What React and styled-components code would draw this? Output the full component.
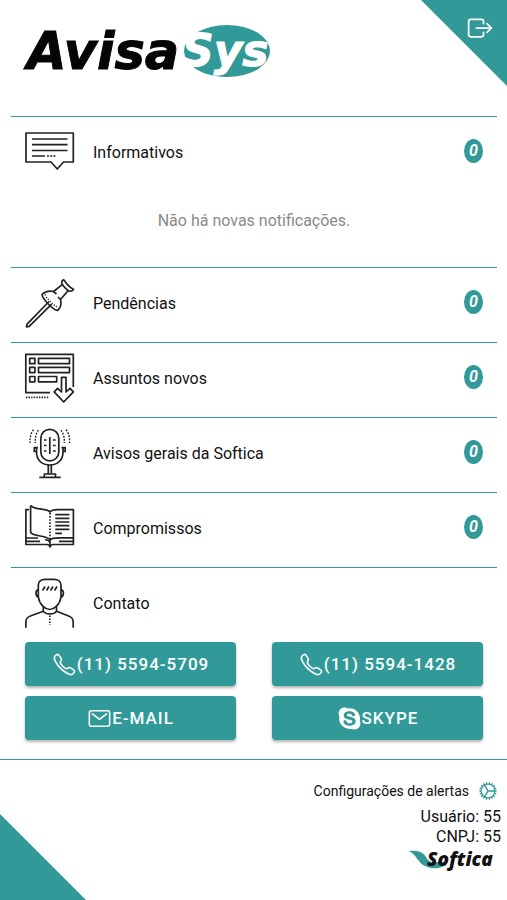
import React from "react";
import styled, { createGlobalStyle } from "styled-components";
import {
  IoCallOutline,
  IoCogOutline,
  IoExitOutline,
  IoLogoSkype,
  IoMailOutline,
} from "react-icons/io5";

const teal = "#319a98";

const GlobalStyle = createGlobalStyle`
  * {
    box-sizing: border-box;
  }
  body {
    margin: 0;
    background: #fff;
    color: #111;
    font-family: Roboto, sans-serif;
    font-size: 16px;
  }
`;

const Page = styled.div`
  display: flex;
  flex-direction: column;
  min-height: 100vh;
`;

const Header = styled.header`
  display: flex;
  justify-content: space-between;
  align-items: flex-start;
  height: 116px;
`;

const Brand = styled.h1`
  margin: 0;
  padding: 20px 0 0 22px;
  line-height: 0;
`;

const ExitButton = styled.button`
  display: flex;
  justify-content: flex-end;
  align-items: flex-start;
  width: 86px;
  height: 86px;
  padding: 14px 13px;
  border: 0;
  background: ${teal};
  color: #fff;
  clip-path: polygon(0 0, 100% 0, 100% 100%);
  cursor: pointer;
`;

const Main = styled.main`
  padding: 0 10px 19px 11px;
`;

const Section = styled.section`
  border-top: 1px solid ${teal};
`;

const Row = styled.button`
  display: flex;
  align-items: center;
  width: 100%;
  padding: 11px 14px 14px;
  border: 0;
  background: none;
  color: inherit;
  font: inherit;
  text-align: left;
  cursor: pointer;
`;

const RowLabel = styled.span`
  flex: 1;
  margin-left: 19px;
`;

const Badge = styled.span`
  width: 19px;
  height: 24px;
  margin-bottom: 3px;
  border-radius: 50%;
  background: ${teal};
  color: #fff;
  font-size: 16px;
  font-style: italic;
  font-weight: 700;
  line-height: 24px;
  text-align: center;
`;

const Empty = styled.p`
  margin: 0;
  padding: 19px 0 35px;
  color: #8a8a8a;
  line-height: 22px;
  text-align: center;
`;

const LineIcon = styled.svg`
  width: 49px;
  height: 49px;
  overflow: visible;
  fill: none;
  stroke: #222;
  stroke-width: 1.7;
  stroke-linejoin: round;
`;

const Contacts = styled.div`
  display: grid;
  grid-template-columns: 1fr 1fr;
  gap: 10px 36px;
  padding: 0 14px;
`;

const ContactLink = styled.a`
  display: flex;
  justify-content: center;
  align-items: center;
  height: 44px;
  border-radius: 4px;
  background: ${teal};
  box-shadow: 0 2px 3px rgba(0, 0, 0, 0.3);
  color: #fff;
  font-size: 17px;
  font-weight: 500;
  letter-spacing: 1px;
  text-decoration: none;
`;

const Footer = styled.footer`
  display: flex;
  flex: 1;
  justify-content: space-between;
  border-top: 1px solid ${teal};
`;

const Corner = styled.div`
  align-self: flex-end;
  width: 86px;
  height: 86px;
  background: ${teal};
  clip-path: polygon(0 0, 100% 100%, 0 100%);
`;

const Info = styled.div`
  display: flex;
  flex-direction: column;
  align-items: flex-end;
  padding: 20px 6px 0 0;
  line-height: 20px;
`;

const SettingsButton = styled.button`
  display: flex;
  align-items: center;
  gap: 8px;
  margin: 0 2px 5px 0;
  padding: 0;
  border: 0;
  background: none;
  color: inherit;
  font: inherit;
  font-size: 14px;
  cursor: pointer;

  svg {
    color: ${teal};
  }
`;

const SofticaLogo = styled.svg`
  margin-right: 8px;
`;

function MessageIcon() {
  return (
    <LineIcon viewBox="0 0 49 49" aria-hidden="true">
      <path d="M1 5H48.3V34H38.5L32.3 41L26 34H1Z" />
      <path d="M7 11H42.5M7 16.7H42.5M7 22.5H42.5M7 28H20" />
      <path d="M22 28H31" strokeDasharray="2 1.2" />
    </LineIcon>
  );
}

function PinIcon() {
  return (
    <LineIcon viewBox="0 0 49 49" aria-hidden="true">
      <path d="M38.5 .8C36.5 1.8 36.3 3.8 37.3 5.6L28.5 12.5C24.5 11.5 20 12.5 17 15.5C17.5 20 28 31 32.5 31.5C35.5 29 36.5 24.5 35.5 20.5L43 11.7C45.3 12.7 47.3 12.2 48.6 10.5C47.5 9.2 46 9.3 44.8 7.8L42.3 5.3C40.6 4 40.3 2 38.5 .8Z" />
      <path d="M37.3 5.6C39 8 41 10 43 11.7M28.5 12.5L31.5 15.2M35.5 20.5L33 18" />
      <path d="M24 22.5L1.9 45.3L1.5 47.8L4.2 47.3L26.7 25.2" />
      <path d="M20 15.5C22 20 28 26 32.5 28" strokeWidth="1.3" strokeDasharray="1.2 1.5" />
    </LineIcon>
  );
}

function ListIcon() {
  return (
    <LineIcon viewBox="0 0 49 49" aria-hidden="true">
      <path d="M48.3 33V.3H.8V38.7H25" />
      <path d="M4.7 4.3H9.9V9.7H4.7ZM4.7 13.3H9.9V18.6H4.7ZM4.7 22.5H9.9V27.8H4.7Z" />
      <path d="M13.5 4.3H44.5V9.7H13.5ZM13.5 13.3H44.5V18.6H13.5ZM13.5 22.5H31.7V27.8H13.5Z" />
      <path d="M36.5 38V23.3H41V38L45 34.3L48.4 37.8L38.7 48L29.2 37.8L32.6 34.3Z" />
      <path d="M1 43.3H24" strokeDasharray="1.4 1.2" />
    </LineIcon>
  );
}

function MicIcon() {
  return (
    <LineIcon viewBox="0 0 49 49" aria-hidden="true">
      <rect x="15.8" y=".3" width="18" height="31.6" rx="9" />
      <path d="M24.8 8V25M19 11H21.5M19 16.5H21.5M19 22H21.5M28 11H30.7M28 16.5H30.7M28 22H30.7" />
      <path d="M11.5 18.5V23C11.5 31 17 36 24.8 36S38 31 38 23V18.5" />
      <path d="M9.3 18.5V22.5M40.2 18.5V22.5M8.5 18.7H13M36.5 18.7H41M8.5 22.5H11.5M38 22.5H41" />
      <path d="M23.3 36V45M26.3 36V45M19.3 48V45H30.5V48M14.3 48.3H35.7" />
      <path
        d="M13.5 1.3C11 4 10 9 10.3 14M8.5 .8C5.7 4 4.8 9 5 14M36 1.3C38.5 4 39.5 9 39.3 14M41 .8C43.8 4 44.8 9 44.6 14"
        strokeWidth="1.4"
        strokeDasharray="1.8 1.3"
      />
    </LineIcon>
  );
}

function BookIcon() {
  return (
    <LineIcon viewBox="0 0 49 49" aria-hidden="true">
      <path d="M5.6 1.5V28.5C9 33 22 31 25 35.8C27 33.8 31 33.8 34 33.8H48.4" />
      <path d="M5.6 1.5C10 6.5 22 4 25 8C27 5.5 30 5.7 34 5.7H48.4V40.5H28C26.5 40.5 25.5 41.5 25 43C24.5 41.5 23.5 40.5 22 40.5H.9V5.7H4" />
      <path d="M1 34H13M1 37.3H15M20 35.5C23 36 24.5 37 25 39M34 37.3H48M25 36V42" />
      <path d="M30.3 10.7H44.4M30.3 14.3H44.4M30.3 18H44.4M30.3 21.7H44.4M30.3 25.4H44.4M30.3 29.3H37" />
      <path d="M25 9V35" strokeDasharray="1.6 1.5" />
    </LineIcon>
  );
}

function PersonIcon() {
  return (
    <LineIcon viewBox="0 0 49 49" aria-hidden="true">
      <path d="M13.3 11V6C13.3 2.5 16 .3 20 .3H29C33 .3 36 2.5 36 6V11C39 10.5 39.5 17 35.8 18.5C35 25.5 29 30.5 24.7 30.5S14.3 25.5 13.5 18.5C10 17 10.3 10.5 13.3 11ZM13.3 11V18M36 11V18" />
      <path d="M17.5 11.5L20 7.5M21.5 11.5L24 7.5M25.5 11.5L28 7.5M29.5 11.5L32 7.5" />
      <path d="M18.3 28V32C20 35.8 30 35.8 31.5 32V28" />
      <path d="M18.3 32.2L6 36.7C2 38.2 .9 39.5 .9 43V48.7M31.5 32.2L43 36.7C47 38.2 48.2 39.5 48.2 43V48.7" />
      <path d="M24.8 36.5V46" strokeDasharray="1.6 1.4" />
    </LineIcon>
  );
}

const topics = [
  { label: "Informativos", icon: MessageIcon, count: 0, empty: "Não há novas notificações." },
  { label: "Pendências", icon: PinIcon, count: 0 },
  { label: "Assuntos novos", icon: ListIcon, count: 0 },
  { label: "Avisos gerais da Softica", icon: MicIcon, count: 0 },
  { label: "Compromissos", icon: BookIcon, count: 0 },
];

const contacts = [
  { label: "(11) 5594-5709", icon: IoCallOutline, href: "tel:+551155945709" },
  { label: "(11) 5594-1428", icon: IoCallOutline, href: "tel:+551155941428" },
  { label: "E-MAIL", icon: IoMailOutline, href: "#email" },
  { label: "SKYPE", icon: IoLogoSkype, href: "#skype" },
];

function Topic({ topic }) {
  const Icon = topic.icon;
  return (
    <Section>
      <Row type="button">
        <Icon />
        <RowLabel>{topic.label}</RowLabel>
        <Badge>{topic.count}</Badge>
      </Row>
      {topic.empty && <Empty>{topic.empty}</Empty>}
    </Section>
  );
}

function App() {
  return (
    <Page>
      <GlobalStyle />
      <Header>
        <Brand>
          <svg width="252" height="62" viewBox="0 0 252 62">
            <ellipse cx="205" cy="31" rx="43" ry="26" fill={teal} />
            <g fontFamily="DejaVu Sans, sans-serif" fontWeight="700" fontStyle="italic">
              <text x="5" y="49" fontSize="51" fill="#050505" stroke="#050505">Avisa</text>
              <text x="160" y="46" fontSize="44" fill="#fff" stroke="#fff">Sys</text>
            </g>
          </svg>
        </Brand>
        <ExitButton type="button" aria-label="Sair">
          <IoExitOutline size={28} />
        </ExitButton>
      </Header>

      <Main>
        {topics.map((topic) => <Topic key={topic.label} topic={topic} />)}
        <Section>
          <Row type="button">
            <PersonIcon />
            <RowLabel>Contato</RowLabel>
          </Row>
          <Contacts>
            {contacts.map(({ label, icon: Icon, href }) => (
              <ContactLink key={label} href={href}>
                <Icon size={25} />
                {label}
              </ContactLink>
            ))}
          </Contacts>
        </Section>
      </Main>

      <Footer>
        <Corner />
        <Info>
          <SettingsButton type="button">
            Configurações de alertas
            <IoCogOutline size={22} />
          </SettingsButton>
          <span>Usuário: 55</span>
          <span>CNPJ: 55</span>
          <SofticaLogo width="84" height="26" viewBox="0 0 84 26">
            <path d="M0 4C9 3 14 5 17 10C19 14 22 16 28 15L38 15C35 22 24 23 16 19C9 16 8 8 0 4Z" fill={teal} />
            <text
              x="18"
              y="19"
              fontFamily="Open Sans, sans-serif"
              fontSize="19"
              fontStyle="italic"
              fontWeight="800"
              fill="#111"
            >
              Softica
            </text>
          </SofticaLogo>
        </Info>
      </Footer>
    </Page>
  );
}

export default App;
